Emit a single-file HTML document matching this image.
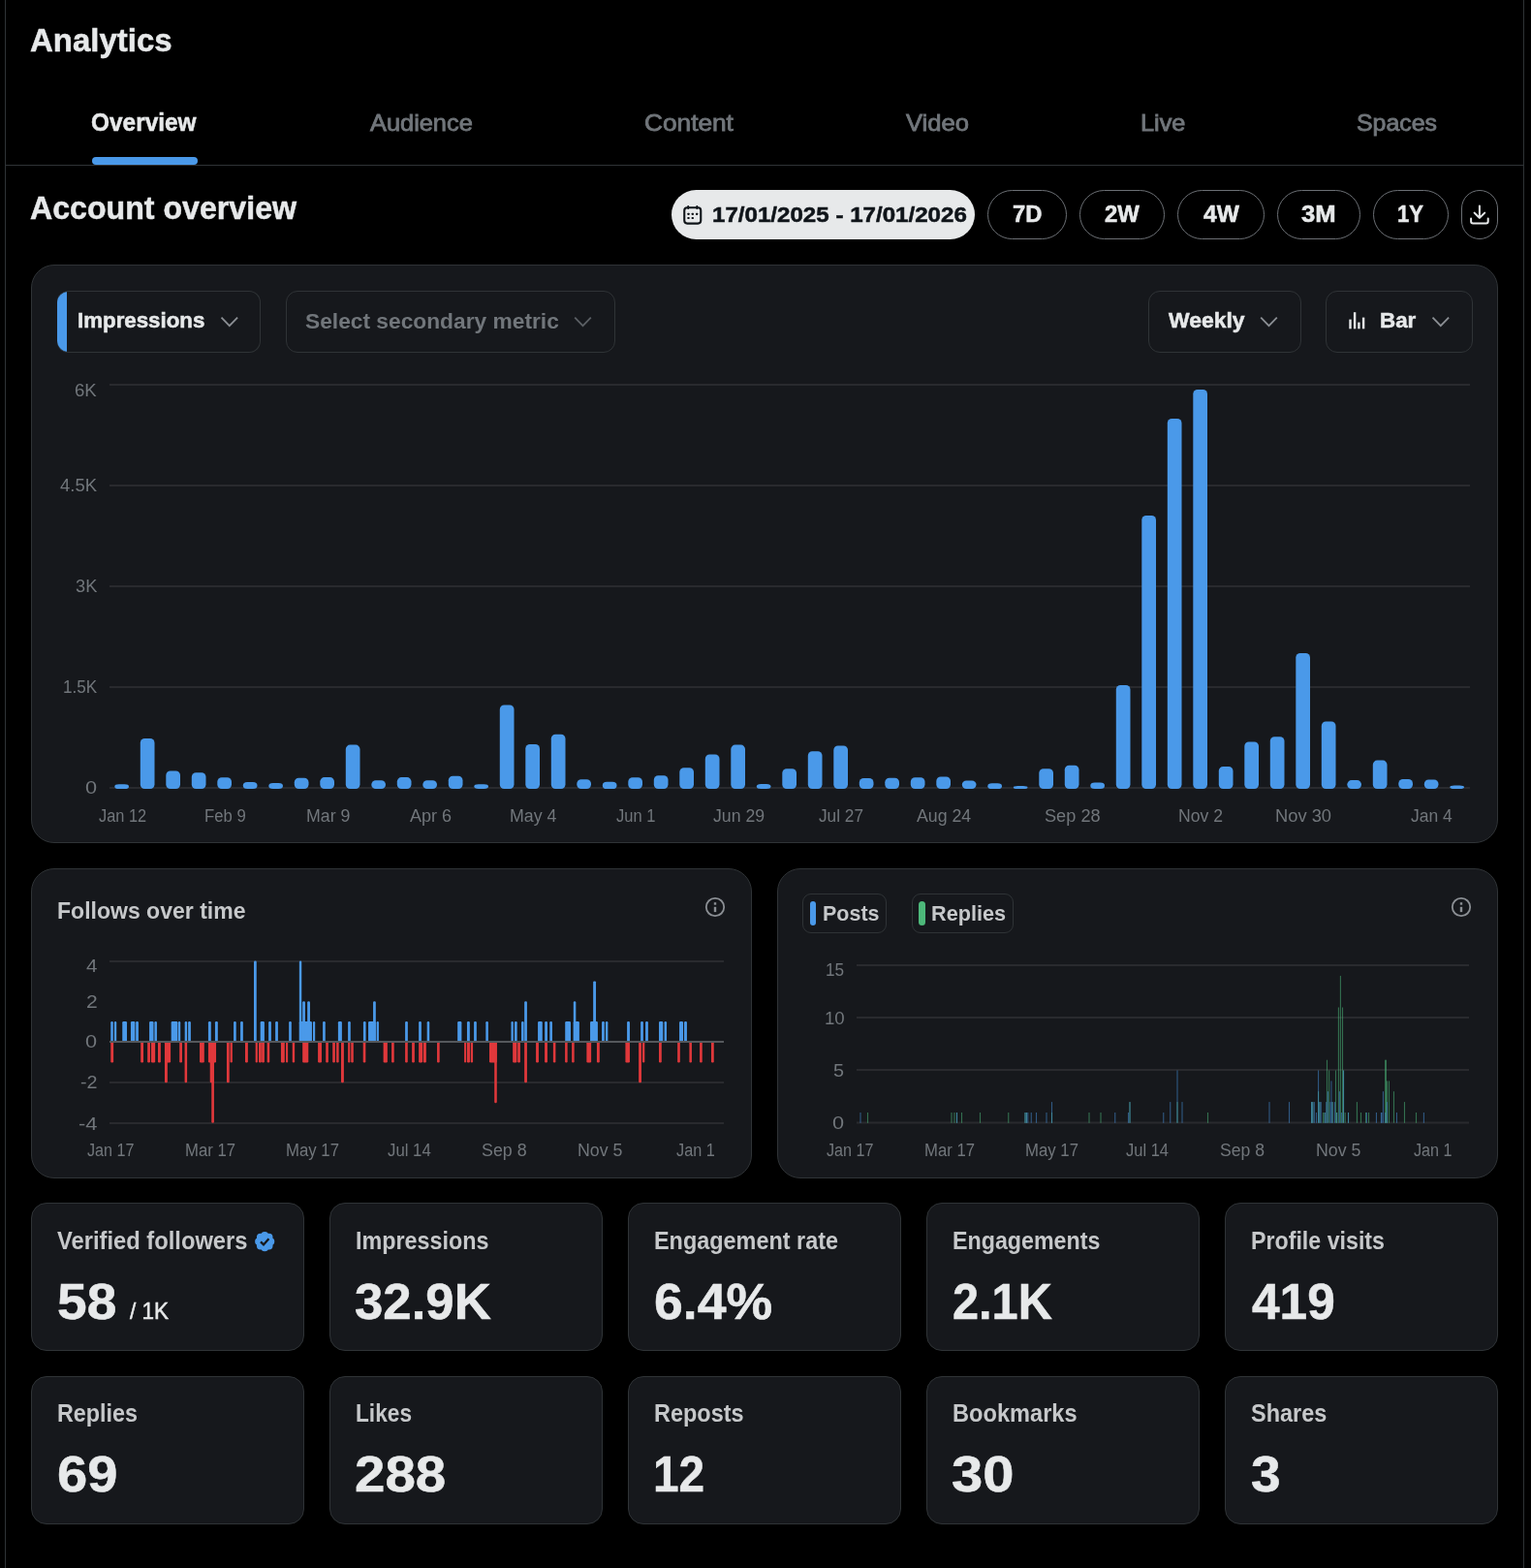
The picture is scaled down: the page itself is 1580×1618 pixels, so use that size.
<!DOCTYPE html>
<html lang="en"><head><meta charset="utf-8"><title>Analytics</title>
<style>
html,body{margin:0;padding:0;background:#000;}
body{width:1580px;height:1618px;position:relative;overflow:hidden;font-family:"Liberation Sans",Arial,Helvetica,sans-serif;color:#e7e9ea;}
.t{position:absolute;white-space:nowrap;margin:0;padding:0;}
svg{position:absolute;left:0;top:0;overflow:visible;}
#root{position:absolute;left:0;top:0;width:1580px;height:1618px;will-change:transform;}
</style></head><body><div id="root">
<div style="position:absolute;left:5px;top:0px;width:1px;height:1618px;box-sizing:border-box;background:#2f3336"></div>
<div style="position:absolute;left:1572px;top:0px;width:1px;height:1618px;box-sizing:border-box;background:#2f3336"></div>
<div style="position:absolute;left:6px;top:170px;width:1566px;height:1px;box-sizing:border-box;background:#2f3336"></div>
<div class="t" style="left:31.01px;top:23px;font-size:33px;line-height:37px;font-weight:700;color:#e7e9ea;transform:scaleX(0.9992);transform-origin:0 0;-webkit-text-stroke:0.5px currentColor;">Analytics</div>
<div class="t" style="left:94.40px;top:112px;font-size:25.6px;line-height:28px;font-weight:700;color:#e7e9ea;transform:scaleX(0.9536);transform-origin:0 0;-webkit-text-stroke:0.5px currentColor;">Overview</div>
<div style="position:absolute;left:95px;top:162px;width:109px;height:7.5px;box-sizing:border-box;background:#4a99e9;border-radius:4px"></div>
<div class="t" style="left:381.75px;top:114px;font-size:23.6px;line-height:26px;font-weight:400;color:#71767b;transform:scaleX(1.0750);transform-origin:0 0;-webkit-text-stroke:0.8px currentColor;">Audience</div>
<div class="t" style="left:665.09px;top:114px;font-size:23.6px;line-height:26px;font-weight:400;color:#71767b;transform:scaleX(1.1119);transform-origin:0 0;-webkit-text-stroke:0.8px currentColor;">Content</div>
<div class="t" style="left:935.30px;top:114px;font-size:23.6px;line-height:26px;font-weight:400;color:#71767b;transform:scaleX(1.0840);transform-origin:0 0;-webkit-text-stroke:0.8px currentColor;">Video</div>
<div class="t" style="left:1176.73px;top:114px;font-size:23.6px;line-height:26px;font-weight:400;color:#71767b;transform:scaleX(1.0714);transform-origin:0 0;-webkit-text-stroke:0.8px currentColor;">Live</div>
<div class="t" style="left:1399.98px;top:114px;font-size:23.6px;line-height:26px;font-weight:400;color:#71767b;transform:scaleX(1.0548);transform-origin:0 0;-webkit-text-stroke:0.8px currentColor;">Spaces</div>
<div class="t" style="left:30.93px;top:196px;font-size:33.1px;line-height:37px;font-weight:700;color:#e7e9ea;transform:scaleX(0.9714);transform-origin:0 0;-webkit-text-stroke:0.5px currentColor;">Account overview</div>
<div style="position:absolute;left:693px;top:196px;width:313px;height:51px;box-sizing:border-box;background:#e7e9ea;border-radius:26px"></div>
<div class="t" style="left:735.40px;top:209px;font-size:22.3px;line-height:25px;font-weight:700;color:#0f1419;transform:scaleX(1.0816);transform-origin:0 0;-webkit-text-stroke:0.5px currentColor;">17/01/2025 - 17/01/2026</div>
<div style="position:absolute;left:1019px;top:196px;width:82px;height:51px;box-sizing:border-box;border:1px solid #6b6f74;border-radius:26px"></div>
<div class="t" style="left:1044.60px;top:208px;font-size:23.1px;line-height:26px;font-weight:700;color:#e7e9ea;transform:scaleX(1.0286);transform-origin:0 0;-webkit-text-stroke:0.5px currentColor;">7D</div>
<div style="position:absolute;left:1114px;top:196px;width:88px;height:51px;box-sizing:border-box;border:1px solid #6b6f74;border-radius:26px"></div>
<div class="t" style="left:1139.69px;top:208px;font-size:23.1px;line-height:26px;font-weight:700;color:#e7e9ea;transform:scaleX(1.0344);transform-origin:0 0;-webkit-text-stroke:0.5px currentColor;">2W</div>
<div style="position:absolute;left:1215px;top:196px;width:90px;height:51px;box-sizing:border-box;border:1px solid #6b6f74;border-radius:26px"></div>
<div class="t" style="left:1241.53px;top:208px;font-size:23.1px;line-height:26px;font-weight:700;color:#e7e9ea;transform:scaleX(1.0620);transform-origin:0 0;-webkit-text-stroke:0.5px currentColor;">4W</div>
<div style="position:absolute;left:1318px;top:196px;width:86px;height:51px;box-sizing:border-box;border:1px solid #6b6f74;border-radius:26px"></div>
<div class="t" style="left:1343.34px;top:208px;font-size:23.1px;line-height:26px;font-weight:700;color:#e7e9ea;transform:scaleX(1.1111);transform-origin:0 0;-webkit-text-stroke:0.5px currentColor;">3M</div>
<div style="position:absolute;left:1417px;top:196px;width:78px;height:51px;box-sizing:border-box;border:1px solid #6b6f74;border-radius:26px"></div>
<div class="t" style="left:1441.94px;top:208px;font-size:23.1px;line-height:26px;font-weight:700;color:#e7e9ea;transform:scaleX(0.9528);transform-origin:0 0;-webkit-text-stroke:0.5px currentColor;">1Y</div>
<div style="position:absolute;left:1508px;top:196px;width:38px;height:51px;box-sizing:border-box;border:1px solid #6b6f74;border-radius:19px"></div>
<div style="position:absolute;left:32px;top:273px;width:1514px;height:597px;box-sizing:border-box;background:#16181c;border:1px solid #2f3336;border-radius:24px"></div>
<div style="position:absolute;left:59px;top:300px;width:210px;height:64px;box-sizing:border-box;border:1px solid #2f3336;border-radius:12px;background:linear-gradient(90deg,#4a99e9 0,#4a99e9 10px,transparent 10px);border-left:0"></div>
<div class="t" style="left:79.53px;top:317px;font-size:22.8px;line-height:26px;font-weight:700;color:#e7e9ea;transform:scaleX(0.9781);transform-origin:0 0;-webkit-text-stroke:0.5px currentColor;">Impressions</div>
<div style="position:absolute;left:295px;top:300px;width:340px;height:64px;box-sizing:border-box;border:1px solid #2f3336;border-radius:12px"></div>
<div class="t" style="left:315.16px;top:319px;font-size:22px;line-height:25px;font-weight:700;color:#71767b;transform:scaleX(1.0342);transform-origin:0 0;">Select secondary metric</div>
<div style="position:absolute;left:1185px;top:300px;width:158px;height:64px;box-sizing:border-box;border:1px solid #2f3336;border-radius:12px"></div>
<div class="t" style="left:1205.68px;top:317px;font-size:22.8px;line-height:26px;font-weight:700;color:#e7e9ea;transform:scaleX(1.0049);transform-origin:0 0;-webkit-text-stroke:0.5px currentColor;">Weekly</div>
<div style="position:absolute;left:1368px;top:300px;width:152px;height:64px;box-sizing:border-box;border:1px solid #2f3336;border-radius:12px"></div>
<div class="t" style="left:1424.12px;top:317px;font-size:22.8px;line-height:26px;font-weight:700;color:#e7e9ea;transform:scaleX(0.9810);transform-origin:0 0;-webkit-text-stroke:0.5px currentColor;">Bar</div>
<div class="t" style="left:77.47px;top:392px;font-size:19.2px;line-height:21px;font-weight:400;color:#71767b;transform:scaleX(0.9680);transform-origin:0 0;">6K</div>
<div class="t" style="left:62.19px;top:490px;font-size:19.2px;line-height:21px;font-weight:400;color:#71767b;transform:scaleX(0.9627);transform-origin:0 0;">4.5K</div>
<div class="t" style="left:77.91px;top:594px;font-size:19.2px;line-height:21px;font-weight:400;color:#71767b;transform:scaleX(0.9493);transform-origin:0 0;">3K</div>
<div class="t" style="left:65.00px;top:698px;font-size:19.2px;line-height:21px;font-weight:400;color:#71767b;transform:scaleX(0.8912);transform-origin:0 0;">1.5K</div>
<div class="t" style="left:88.35px;top:802px;font-size:19.2px;line-height:21px;font-weight:400;color:#71767b;transform:scaleX(1.1316);transform-origin:0 0;">0</div>
<div class="t" style="left:101.95px;top:831px;font-size:19.2px;line-height:21px;font-weight:400;color:#71767b;transform:scaleX(0.8517);transform-origin:0 0;">Jan 12</div>
<div class="t" style="left:211.03px;top:831px;font-size:19.2px;line-height:21px;font-weight:400;color:#71767b;transform:scaleX(0.8713);transform-origin:0 0;">Feb 9</div>
<div class="t" style="left:315.84px;top:831px;font-size:19.2px;line-height:21px;font-weight:400;color:#71767b;transform:scaleX(0.9255);transform-origin:0 0;">Mar 9</div>
<div class="t" style="left:422.86px;top:831px;font-size:19.2px;line-height:21px;font-weight:400;color:#71767b;transform:scaleX(0.9398);transform-origin:0 0;">Apr 6</div>
<div class="t" style="left:526.24px;top:831px;font-size:19.2px;line-height:21px;font-weight:400;color:#71767b;transform:scaleX(0.9276);transform-origin:0 0;">May 4</div>
<div class="t" style="left:635.75px;top:831px;font-size:19.2px;line-height:21px;font-weight:400;color:#71767b;transform:scaleX(0.8614);transform-origin:0 0;">Jun 1</div>
<div class="t" style="left:735.53px;top:831px;font-size:19.2px;line-height:21px;font-weight:400;color:#71767b;transform:scaleX(0.9217);transform-origin:0 0;">Jun 29</div>
<div class="t" style="left:845.34px;top:831px;font-size:19.2px;line-height:21px;font-weight:400;color:#71767b;transform:scaleX(0.8989);transform-origin:0 0;">Jul 27</div>
<div class="t" style="left:945.76px;top:831px;font-size:19.2px;line-height:21px;font-weight:400;color:#71767b;transform:scaleX(0.9248);transform-origin:0 0;">Aug 24</div>
<div class="t" style="left:1077.78px;top:831px;font-size:19.2px;line-height:21px;font-weight:400;color:#71767b;transform:scaleX(0.9470);transform-origin:0 0;">Sep 28</div>
<div class="t" style="left:1216.25px;top:831px;font-size:19.2px;line-height:21px;font-weight:400;color:#71767b;transform:scaleX(0.9183);transform-origin:0 0;">Nov 2</div>
<div class="t" style="left:1316.00px;top:831px;font-size:19.2px;line-height:21px;font-weight:400;color:#71767b;transform:scaleX(0.9540);transform-origin:0 0;">Nov 30</div>
<div class="t" style="left:1455.84px;top:831px;font-size:19.2px;line-height:21px;font-weight:400;color:#71767b;transform:scaleX(0.9131);transform-origin:0 0;">Jan 4</div>
<div style="position:absolute;left:32px;top:896px;width:744px;height:320px;box-sizing:border-box;background:#16181c;border:1px solid #2f3336;border-radius:24px"></div>
<div style="position:absolute;left:802px;top:896px;width:744px;height:320px;box-sizing:border-box;background:#16181c;border:1px solid #2f3336;border-radius:24px"></div>
<div class="t" style="left:59.38px;top:927px;font-size:23.2px;line-height:26px;font-weight:700;color:#c6c8ca;transform:scaleX(0.9931);transform-origin:0 0;">Follows over time</div>
<div class="t" style="left:88.95px;top:986px;font-size:19.2px;line-height:21px;font-weight:400;color:#71767b;transform:scaleX(1.0733);transform-origin:0 0;">4</div>
<div class="t" style="left:88.95px;top:1023px;font-size:19.2px;line-height:21px;font-weight:400;color:#71767b;transform:scaleX(1.0973);transform-origin:0 0;">2</div>
<div class="t" style="left:88.35px;top:1064px;font-size:19.2px;line-height:21px;font-weight:400;color:#71767b;transform:scaleX(1.1316);transform-origin:0 0;">0</div>
<div class="t" style="left:83.03px;top:1106px;font-size:19.2px;line-height:21px;font-weight:400;color:#71767b;transform:scaleX(1.0292);transform-origin:0 0;">-2</div>
<div class="t" style="left:80.93px;top:1149px;font-size:19.2px;line-height:21px;font-weight:400;color:#71767b;transform:scaleX(1.1432);transform-origin:0 0;">-4</div>
<div class="t" style="left:89.76px;top:1176px;font-size:19.2px;line-height:21px;font-weight:400;color:#71767b;transform:scaleX(0.8428);transform-origin:0 0;">Jan 17</div>
<div class="t" style="left:190.88px;top:1176px;font-size:19.2px;line-height:21px;font-weight:400;color:#71767b;transform:scaleX(0.8700);transform-origin:0 0;">Mar 17</div>
<div class="t" style="left:295.12px;top:1176px;font-size:19.2px;line-height:21px;font-weight:400;color:#71767b;transform:scaleX(0.8736);transform-origin:0 0;">May 17</div>
<div class="t" style="left:400.25px;top:1176px;font-size:19.2px;line-height:21px;font-weight:400;color:#71767b;transform:scaleX(0.8738);transform-origin:0 0;">Jul 14</div>
<div class="t" style="left:497.20px;top:1176px;font-size:19.2px;line-height:21px;font-weight:400;color:#71767b;transform:scaleX(0.9285);transform-origin:0 0;">Sep 8</div>
<div class="t" style="left:596.29px;top:1176px;font-size:19.2px;line-height:21px;font-weight:400;color:#71767b;transform:scaleX(0.9265);transform-origin:0 0;">Nov 5</div>
<div class="t" style="left:698.01px;top:1176px;font-size:19.2px;line-height:21px;font-weight:400;color:#71767b;transform:scaleX(0.8472);transform-origin:0 0;">Jan 1</div>
<div style="position:absolute;left:828px;top:922px;width:87px;height:41px;box-sizing:border-box;border:1px solid #2f3336;border-radius:9px"></div>
<div style="position:absolute;left:836px;top:930px;width:6.4px;height:25px;box-sizing:border-box;background:#4a99e9;border-radius:3.2px"></div>
<div class="t" style="left:848.78px;top:930px;font-size:22.5px;line-height:25px;font-weight:700;color:#c6c8ca;transform:scaleX(0.9543);transform-origin:0 0;">Posts</div>
<div style="position:absolute;left:941px;top:922px;width:105px;height:41px;box-sizing:border-box;border:1px solid #2f3336;border-radius:9px"></div>
<div style="position:absolute;left:948px;top:930px;width:7px;height:25px;box-sizing:border-box;background:#4db87a;border-radius:3.5px"></div>
<div class="t" style="left:961.37px;top:930px;font-size:22.5px;line-height:25px;font-weight:700;color:#c6c8ca;transform:scaleX(0.9632);transform-origin:0 0;">Replies</div>
<div class="t" style="left:852.39px;top:990px;font-size:19.2px;line-height:21px;font-weight:400;color:#71767b;transform:scaleX(0.8956);transform-origin:0 0;">15</div>
<div class="t" style="left:850.78px;top:1040px;font-size:19.2px;line-height:21px;font-weight:400;color:#71767b;transform:scaleX(0.9712);transform-origin:0 0;">10</div>
<div class="t" style="left:860.41px;top:1094px;font-size:19.2px;line-height:21px;font-weight:400;color:#71767b;transform:scaleX(1.0314);transform-origin:0 0;">5</div>
<div class="t" style="left:859.35px;top:1148px;font-size:19.2px;line-height:21px;font-weight:400;color:#71767b;transform:scaleX(1.1316);transform-origin:0 0;">0</div>
<div class="t" style="left:852.76px;top:1176px;font-size:19.2px;line-height:21px;font-weight:400;color:#71767b;transform:scaleX(0.8428);transform-origin:0 0;">Jan 17</div>
<div class="t" style="left:953.88px;top:1176px;font-size:19.2px;line-height:21px;font-weight:400;color:#71767b;transform:scaleX(0.8700);transform-origin:0 0;">Mar 17</div>
<div class="t" style="left:1057.62px;top:1176px;font-size:19.2px;line-height:21px;font-weight:400;color:#71767b;transform:scaleX(0.8736);transform-origin:0 0;">May 17</div>
<div class="t" style="left:1162.25px;top:1176px;font-size:19.2px;line-height:21px;font-weight:400;color:#71767b;transform:scaleX(0.8589);transform-origin:0 0;">Jul 14</div>
<div class="t" style="left:1258.96px;top:1176px;font-size:19.2px;line-height:21px;font-weight:400;color:#71767b;transform:scaleX(0.9182);transform-origin:0 0;">Sep 8</div>
<div class="t" style="left:1357.54px;top:1176px;font-size:19.2px;line-height:21px;font-weight:400;color:#71767b;transform:scaleX(0.9265);transform-origin:0 0;">Nov 5</div>
<div class="t" style="left:1459.26px;top:1176px;font-size:19.2px;line-height:21px;font-weight:400;color:#71767b;transform:scaleX(0.8417);transform-origin:0 0;">Jan 1</div>
<div style="position:absolute;left:32px;top:1241px;width:282px;height:153px;box-sizing:border-box;background:#16181c;border:1px solid #2f3336;border-radius:16px"></div>
<div class="t" style="left:58.66px;top:1266px;font-size:25px;line-height:28px;font-weight:700;color:#c6c8ca;transform:scaleX(0.9492);transform-origin:0 0;">Verified followers</div>
<div class="t" style="left:58.95px;top:1315px;font-size:51px;line-height:57px;font-weight:700;color:#e7e9ea;transform:scaleX(1.0808);transform-origin:0 0;-webkit-text-stroke:0.5px currentColor;">58</div>
<div style="position:absolute;left:340px;top:1241px;width:282px;height:153px;box-sizing:border-box;background:#16181c;border:1px solid #2f3336;border-radius:16px"></div>
<div class="t" style="left:367.06px;top:1266px;font-size:25px;line-height:28px;font-weight:700;color:#c6c8ca;transform:scaleX(0.9334);transform-origin:0 0;">Impressions</div>
<div class="t" style="left:366.34px;top:1315px;font-size:51px;line-height:57px;font-weight:700;color:#e7e9ea;transform:scaleX(1.0342);transform-origin:0 0;-webkit-text-stroke:0.5px currentColor;">32.9K</div>
<div style="position:absolute;left:648px;top:1241px;width:282px;height:153px;box-sizing:border-box;background:#16181c;border:1px solid #2f3336;border-radius:16px"></div>
<div class="t" style="left:674.85px;top:1266px;font-size:25px;line-height:28px;font-weight:700;color:#c6c8ca;transform:scaleX(0.9369);transform-origin:0 0;">Engagement rate</div>
<div class="t" style="left:674.97px;top:1315px;font-size:51px;line-height:57px;font-weight:700;color:#e7e9ea;transform:scaleX(1.0497);transform-origin:0 0;-webkit-text-stroke:0.5px currentColor;">6.4%</div>
<div style="position:absolute;left:956px;top:1241px;width:282px;height:153px;box-sizing:border-box;background:#16181c;border:1px solid #2f3336;border-radius:16px"></div>
<div class="t" style="left:983.17px;top:1266px;font-size:25px;line-height:28px;font-weight:700;color:#c6c8ca;transform:scaleX(0.9294);transform-origin:0 0;">Engagements</div>
<div class="t" style="left:983.25px;top:1315px;font-size:51px;line-height:57px;font-weight:700;color:#e7e9ea;transform:scaleX(0.9542);transform-origin:0 0;-webkit-text-stroke:0.5px currentColor;">2.1K</div>
<div style="position:absolute;left:1264px;top:1241px;width:282px;height:153px;box-sizing:border-box;background:#16181c;border:1px solid #2f3336;border-radius:16px"></div>
<div class="t" style="left:1291.17px;top:1266px;font-size:25px;line-height:28px;font-weight:700;color:#c6c8ca;transform:scaleX(0.9280);transform-origin:0 0;">Profile visits</div>
<div class="t" style="left:1291.53px;top:1315px;font-size:51px;line-height:57px;font-weight:700;color:#e7e9ea;transform:scaleX(1.0075);transform-origin:0 0;-webkit-text-stroke:0.5px currentColor;">419</div>
<div style="position:absolute;left:32px;top:1420px;width:282px;height:153px;box-sizing:border-box;background:#16181c;border:1px solid #2f3336;border-radius:16px"></div>
<div class="t" style="left:58.86px;top:1444px;font-size:25px;line-height:28px;font-weight:700;color:#c6c8ca;transform:scaleX(0.9341);transform-origin:0 0;">Replies</div>
<div class="t" style="left:58.58px;top:1493px;font-size:51px;line-height:57px;font-weight:700;color:#e7e9ea;transform:scaleX(1.1008);transform-origin:0 0;-webkit-text-stroke:0.5px currentColor;">69</div>
<div style="position:absolute;left:340px;top:1420px;width:282px;height:153px;box-sizing:border-box;background:#16181c;border:1px solid #2f3336;border-radius:16px"></div>
<div class="t" style="left:366.90px;top:1444px;font-size:25px;line-height:28px;font-weight:700;color:#c6c8ca;transform:scaleX(0.9073);transform-origin:0 0;">Likes</div>
<div class="t" style="left:366.48px;top:1493px;font-size:51px;line-height:57px;font-weight:700;color:#e7e9ea;transform:scaleX(1.1073);transform-origin:0 0;-webkit-text-stroke:0.5px currentColor;">288</div>
<div style="position:absolute;left:648px;top:1420px;width:282px;height:153px;box-sizing:border-box;background:#16181c;border:1px solid #2f3336;border-radius:16px"></div>
<div class="t" style="left:674.85px;top:1444px;font-size:25px;line-height:28px;font-weight:700;color:#c6c8ca;transform:scaleX(0.9387);transform-origin:0 0;">Reposts</div>
<div class="t" style="left:674.04px;top:1493px;font-size:51px;line-height:57px;font-weight:700;color:#e7e9ea;transform:scaleX(0.9365);transform-origin:0 0;-webkit-text-stroke:0.5px currentColor;">12</div>
<div style="position:absolute;left:956px;top:1420px;width:282px;height:153px;box-sizing:border-box;background:#16181c;border:1px solid #2f3336;border-radius:16px"></div>
<div class="t" style="left:982.84px;top:1444px;font-size:25px;line-height:28px;font-weight:700;color:#c6c8ca;transform:scaleX(0.9444);transform-origin:0 0;">Bookmarks</div>
<div class="t" style="left:981.92px;top:1493px;font-size:51px;line-height:57px;font-weight:700;color:#e7e9ea;transform:scaleX(1.1369);transform-origin:0 0;-webkit-text-stroke:0.5px currentColor;">30</div>
<div style="position:absolute;left:1264px;top:1420px;width:282px;height:153px;box-sizing:border-box;background:#16181c;border:1px solid #2f3336;border-radius:16px"></div>
<div class="t" style="left:1291.14px;top:1444px;font-size:25px;line-height:28px;font-weight:700;color:#c6c8ca;transform:scaleX(0.9390);transform-origin:0 0;">Shares</div>
<div class="t" style="left:1290.79px;top:1493px;font-size:51px;line-height:57px;font-weight:700;color:#e7e9ea;transform:scaleX(1.0801);transform-origin:0 0;-webkit-text-stroke:0.5px currentColor;">3</div>
<div class="t" style="left:134.00px;top:1340px;font-size:23.2px;line-height:26px;font-weight:400;color:#e7e9ea;transform:scaleX(0.9709);transform-origin:0 0;-webkit-text-stroke:0.5px currentColor;">/ 1K</div>
<svg width="1580" height="1618" viewBox="0 0 1580 1618">
<g fill="none" stroke="#0f1419" stroke-width="2"><rect x="706.25" y="214.3" width="17" height="16.3" rx="3" stroke-width="2.1"/><path d="M710.2 212.9v2.2M719.3 212.9v2.2" stroke-linecap="round"/></g>
<rect x="709.4" y="219.70000000000002" width="2.2" height="2.2" rx="0.6" fill="#0f1419"/>
<rect x="713.6999999999999" y="219.70000000000002" width="2.2" height="2.2" rx="0.6" fill="#0f1419"/>
<rect x="718.0" y="219.70000000000002" width="2.2" height="2.2" rx="0.6" fill="#0f1419"/>
<rect x="709.4" y="223.9" width="2.2" height="2.2" rx="0.6" fill="#0f1419"/>
<rect x="713.6999999999999" y="223.9" width="2.2" height="2.2" rx="0.6" fill="#0f1419"/>
<g fill="none" stroke="#e7e9ea" stroke-width="2" stroke-linecap="round" stroke-linejoin="round"><path d="M1526.9 212.6V224.6M1521.6 219.6l5.3 5.3 5.3-5.3"/><path d="M1518.1 225.6v3a2 2 0 0 0 2 2h13.6a2 2 0 0 0 2-2v-3"/></g>
<path d="M228.5 327.7L236.8 336.1L245.10000000000002 327.7" fill="none" stroke="#8b8f94" stroke-width="1.8"/>
<path d="M593.2 327.7L601.5 336.1L609.8 327.7" fill="none" stroke="#5b5f64" stroke-width="1.8"/>
<path d="M1301.2 327.7L1309.5 336.1L1317.8 327.7" fill="none" stroke="#8b8f94" stroke-width="1.8"/>
<path d="M1478.5 327.7L1486.8 336.1L1495.1 327.7" fill="none" stroke="#8b8f94" stroke-width="1.8"/>
<rect x="1392.3" y="329.6" width="2.4" height="9.7" fill="#e7e9ea"/>
<rect x="1396.9" y="322.2" width="2.4" height="17.1" fill="#e7e9ea"/>
<rect x="1401.2" y="332.6" width="2.4" height="6.7" fill="#e7e9ea"/>
<rect x="1405.9" y="327.6" width="2.4" height="11.7" fill="#e7e9ea"/>
<circle cx="738" cy="936" r="9.2" fill="none" stroke="#8b8f94" stroke-width="1.8"/><rect x="736.8" y="931.2" width="2.4" height="2.5" fill="#8b8f94"/><rect x="736.8" y="935.8" width="2.4" height="5.3" fill="#8b8f94"/>
<circle cx="1508" cy="936" r="9.2" fill="none" stroke="#8b8f94" stroke-width="1.8"/><rect x="1506.8" y="931.2" width="2.4" height="2.5" fill="#8b8f94"/><rect x="1506.8" y="935.8" width="2.4" height="5.3" fill="#8b8f94"/>
<circle cx="273.20" cy="1274.96" r="3.96" fill="#4a99e9"/><circle cx="277.54" cy="1276.76" r="3.96" fill="#4a99e9"/><circle cx="279.34" cy="1281.10" r="3.96" fill="#4a99e9"/><circle cx="277.54" cy="1285.44" r="3.96" fill="#4a99e9"/><circle cx="273.20" cy="1287.24" r="3.96" fill="#4a99e9"/><circle cx="268.86" cy="1285.44" r="3.96" fill="#4a99e9"/><circle cx="267.06" cy="1281.10" r="3.96" fill="#4a99e9"/><circle cx="268.86" cy="1276.76" r="3.96" fill="#4a99e9"/><circle cx="273.2" cy="1281.1" r="6.93" fill="#4a99e9"/><path d="M269.0 1281.3999999999999l3 3 5.4-6.2" fill="none" stroke="#16181c" stroke-width="2.3"/>
<rect x="113" y="396" width="1404" height="2" fill="#292a2e"/>
<rect x="113" y="500" width="1404" height="2" fill="#292a2e"/>
<rect x="113" y="604" width="1404" height="2" fill="#292a2e"/>
<rect x="113" y="708" width="1404" height="2" fill="#292a2e"/>
<rect x="113" y="812" width="1404" height="2" fill="#292a2e"/>
<rect x="118.3" y="809.3" width="14.7" height="4.7" rx="4.5" ry="2.4" fill="#4a99e9"/>
<rect x="144.8" y="761.9" width="14.7" height="52.1" rx="4.5" ry="4.5" fill="#4a99e9"/>
<rect x="171.3" y="795.5" width="14.7" height="18.5" rx="4.5" ry="4.5" fill="#4a99e9"/>
<rect x="197.8" y="797.3" width="14.7" height="16.7" rx="4.5" ry="4.5" fill="#4a99e9"/>
<rect x="224.3" y="802.3" width="14.7" height="11.7" rx="4.5" ry="4.5" fill="#4a99e9"/>
<rect x="250.8" y="806.9" width="14.7" height="7.1" rx="4.5" ry="3.6" fill="#4a99e9"/>
<rect x="277.3" y="808.0" width="14.7" height="6.0" rx="4.5" ry="3.0" fill="#4a99e9"/>
<rect x="303.8" y="802.8" width="14.7" height="11.2" rx="4.5" ry="4.5" fill="#4a99e9"/>
<rect x="330.3" y="802.1" width="14.7" height="11.9" rx="4.5" ry="4.5" fill="#4a99e9"/>
<rect x="356.8" y="768.6" width="14.7" height="45.4" rx="4.5" ry="4.5" fill="#4a99e9"/>
<rect x="383.3" y="805.3" width="14.7" height="8.7" rx="4.5" ry="4.4" fill="#4a99e9"/>
<rect x="409.8" y="802.1" width="14.7" height="11.9" rx="4.5" ry="4.5" fill="#4a99e9"/>
<rect x="436.3" y="805.3" width="14.7" height="8.7" rx="4.5" ry="4.4" fill="#4a99e9"/>
<rect x="462.8" y="800.8" width="14.7" height="13.2" rx="4.5" ry="4.5" fill="#4a99e9"/>
<rect x="489.3" y="809.2" width="14.7" height="4.8" rx="4.5" ry="2.4" fill="#4a99e9"/>
<rect x="515.8" y="727.4" width="14.7" height="86.6" rx="4.5" ry="4.5" fill="#4a99e9"/>
<rect x="542.3" y="767.9" width="14.7" height="46.1" rx="4.5" ry="4.5" fill="#4a99e9"/>
<rect x="568.8" y="757.7" width="14.7" height="56.3" rx="4.5" ry="4.5" fill="#4a99e9"/>
<rect x="595.3" y="804.2" width="14.7" height="9.8" rx="4.5" ry="4.5" fill="#4a99e9"/>
<rect x="621.8" y="806.7" width="14.7" height="7.3" rx="4.5" ry="3.6" fill="#4a99e9"/>
<rect x="648.3" y="802.3" width="14.7" height="11.7" rx="4.5" ry="4.5" fill="#4a99e9"/>
<rect x="674.8" y="800.3" width="14.7" height="13.7" rx="4.5" ry="4.5" fill="#4a99e9"/>
<rect x="701.3" y="792.3" width="14.7" height="21.7" rx="4.5" ry="4.5" fill="#4a99e9"/>
<rect x="727.8" y="778.4" width="14.7" height="35.6" rx="4.5" ry="4.5" fill="#4a99e9"/>
<rect x="754.3" y="768.6" width="14.7" height="45.4" rx="4.5" ry="4.5" fill="#4a99e9"/>
<rect x="780.8" y="809.0" width="14.7" height="5.0" rx="4.5" ry="2.5" fill="#4a99e9"/>
<rect x="807.3" y="793.2" width="14.7" height="20.8" rx="4.5" ry="4.5" fill="#4a99e9"/>
<rect x="833.8" y="775.2" width="14.7" height="38.8" rx="4.5" ry="4.5" fill="#4a99e9"/>
<rect x="860.3" y="769.5" width="14.7" height="44.5" rx="4.5" ry="4.5" fill="#4a99e9"/>
<rect x="886.8" y="803.0" width="14.7" height="11.0" rx="4.5" ry="4.5" fill="#4a99e9"/>
<rect x="913.3" y="802.8" width="14.7" height="11.2" rx="4.5" ry="4.5" fill="#4a99e9"/>
<rect x="939.8" y="802.3" width="14.7" height="11.7" rx="4.5" ry="4.5" fill="#4a99e9"/>
<rect x="966.3" y="801.4" width="14.7" height="12.6" rx="4.5" ry="4.5" fill="#4a99e9"/>
<rect x="992.8" y="805.5" width="14.7" height="8.5" rx="4.5" ry="4.2" fill="#4a99e9"/>
<rect x="1019.3" y="808.3" width="14.7" height="5.7" rx="4.5" ry="2.9" fill="#4a99e9"/>
<rect x="1045.8" y="811.0" width="14.7" height="3.0" rx="4.5" ry="1.5" fill="#4a99e9"/>
<rect x="1072.3" y="793.2" width="14.7" height="20.8" rx="4.5" ry="4.5" fill="#4a99e9"/>
<rect x="1098.8" y="789.8" width="14.7" height="24.2" rx="4.5" ry="4.5" fill="#4a99e9"/>
<rect x="1125.3" y="807.6" width="14.7" height="6.4" rx="4.5" ry="3.2" fill="#4a99e9"/>
<rect x="1151.8" y="707.0" width="14.7" height="107.0" rx="4.5" ry="4.5" fill="#4a99e9"/>
<rect x="1178.3" y="532.0" width="14.7" height="282.0" rx="4.5" ry="4.5" fill="#4a99e9"/>
<rect x="1204.8" y="432.0" width="14.7" height="382.0" rx="4.5" ry="4.5" fill="#4a99e9"/>
<rect x="1231.3" y="402.0" width="14.7" height="412.0" rx="4.5" ry="4.5" fill="#4a99e9"/>
<rect x="1257.8" y="791.0" width="14.7" height="23.0" rx="4.5" ry="4.5" fill="#4a99e9"/>
<rect x="1284.3" y="765.4" width="14.7" height="48.6" rx="4.5" ry="4.5" fill="#4a99e9"/>
<rect x="1310.8" y="760.2" width="14.7" height="53.8" rx="4.5" ry="4.5" fill="#4a99e9"/>
<rect x="1337.3" y="674.0" width="14.7" height="140.0" rx="4.5" ry="4.5" fill="#4a99e9"/>
<rect x="1363.8" y="744.5" width="14.7" height="69.5" rx="4.5" ry="4.5" fill="#4a99e9"/>
<rect x="1390.3" y="805.1" width="14.7" height="8.9" rx="4.5" ry="4.4" fill="#4a99e9"/>
<rect x="1416.8" y="784.6" width="14.7" height="29.4" rx="4.5" ry="4.5" fill="#4a99e9"/>
<rect x="1443.3" y="803.9" width="14.7" height="10.1" rx="4.5" ry="4.5" fill="#4a99e9"/>
<rect x="1469.8" y="804.4" width="14.7" height="9.6" rx="4.5" ry="4.5" fill="#4a99e9"/>
<rect x="1496.3" y="810.5" width="14.7" height="3.5" rx="4.5" ry="1.8" fill="#4a99e9"/>
<rect x="113" y="991" width="634" height="2" fill="#292a2e"/>
<rect x="113" y="1116" width="634" height="2" fill="#292a2e"/>
<rect x="113" y="1158" width="634" height="2" fill="#292a2e"/>
<rect x="114.24" y="1054.0" width="2.54" height="21.0" rx="1.2" fill="#4a99e9"/>
<rect x="117.91" y="1054.0" width="2.32" height="21.0" rx="1.2" fill="#4a99e9"/>
<rect x="126.25" y="1054.0" width="4.77" height="21.0" rx="1.2" fill="#4a99e9"/>
<rect x="134.93" y="1054.0" width="4.43" height="21.0" rx="1.2" fill="#4a99e9"/>
<rect x="140.16" y="1054.0" width="2.76" height="21.0" rx="1.2" fill="#4a99e9"/>
<rect x="154.07" y="1054.0" width="4.43" height="21.0" rx="1.2" fill="#4a99e9"/>
<rect x="159.41" y="1054.0" width="2.54" height="21.0" rx="1.2" fill="#4a99e9"/>
<rect x="176.66" y="1054.0" width="6.66" height="21.0" rx="1.2" fill="#4a99e9"/>
<rect x="183.89" y="1054.0" width="2.32" height="21.0" rx="1.2" fill="#4a99e9"/>
<rect x="190.68" y="1054.0" width="2.43" height="21.0" rx="1.2" fill="#4a99e9"/>
<rect x="194.13" y="1054.0" width="2.76" height="21.0" rx="1.2" fill="#4a99e9"/>
<rect x="214.93" y="1054.0" width="2.88" height="21.0" rx="1.2" fill="#4a99e9"/>
<rect x="221.94" y="1054.0" width="2.88" height="21.0" rx="1.2" fill="#4a99e9"/>
<rect x="241.08" y="1054.0" width="2.65" height="21.0" rx="1.2" fill="#4a99e9"/>
<rect x="248.09" y="1054.0" width="2.76" height="21.0" rx="1.2" fill="#4a99e9"/>
<rect x="262.00" y="991.6" width="2.76" height="83.4" rx="1.2" fill="#4a99e9"/>
<rect x="268.67" y="1054.0" width="4.21" height="21.0" rx="1.2" fill="#4a99e9"/>
<rect x="277.13" y="1054.0" width="2.76" height="21.0" rx="1.2" fill="#4a99e9"/>
<rect x="284.14" y="1054.0" width="2.76" height="21.0" rx="1.2" fill="#4a99e9"/>
<rect x="298.16" y="1054.0" width="2.65" height="21.0" rx="1.2" fill="#4a99e9"/>
<rect x="308.84" y="991.6" width="2.43" height="83.4" rx="1.2" fill="#4a99e9"/>
<rect x="308.84" y="1054.0" width="13.11" height="21.0" rx="1.2" fill="#4a99e9"/>
<rect x="312.18" y="1033.3" width="2.76" height="41.7" rx="1.2" fill="#4a99e9"/>
<rect x="317.19" y="1033.3" width="2.76" height="41.7" rx="1.2" fill="#4a99e9"/>
<rect x="322.97" y="1054.0" width="2.21" height="21.0" rx="1.2" fill="#4a99e9"/>
<rect x="333.10" y="1054.0" width="2.65" height="21.0" rx="1.2" fill="#4a99e9"/>
<rect x="348.90" y="1054.0" width="3.99" height="21.0" rx="1.2" fill="#4a99e9"/>
<rect x="359.13" y="1054.0" width="2.65" height="21.0" rx="1.2" fill="#4a99e9"/>
<rect x="374.93" y="1054.0" width="2.65" height="21.0" rx="1.2" fill="#4a99e9"/>
<rect x="380.05" y="1054.0" width="7.77" height="21.0" rx="1.2" fill="#4a99e9"/>
<rect x="385.06" y="1033.3" width="2.76" height="41.7" rx="1.2" fill="#4a99e9"/>
<rect x="388.62" y="1054.0" width="2.32" height="21.0" rx="1.2" fill="#4a99e9"/>
<rect x="418.10" y="1054.0" width="2.76" height="21.0" rx="1.2" fill="#4a99e9"/>
<rect x="432.12" y="1054.0" width="2.76" height="21.0" rx="1.2" fill="#4a99e9"/>
<rect x="440.69" y="1054.0" width="2.54" height="21.0" rx="1.2" fill="#4a99e9"/>
<rect x="472.18" y="1054.0" width="4.21" height="21.0" rx="1.2" fill="#4a99e9"/>
<rect x="481.97" y="1054.0" width="2.88" height="21.0" rx="1.2" fill="#4a99e9"/>
<rect x="489.09" y="1054.0" width="2.76" height="21.0" rx="1.2" fill="#4a99e9"/>
<rect x="501.33" y="1054.0" width="2.54" height="21.0" rx="1.2" fill="#4a99e9"/>
<rect x="527.48" y="1054.0" width="2.32" height="21.0" rx="1.2" fill="#4a99e9"/>
<rect x="531.04" y="1054.0" width="2.65" height="21.0" rx="1.2" fill="#4a99e9"/>
<rect x="538.05" y="1054.0" width="2.54" height="21.0" rx="1.2" fill="#4a99e9"/>
<rect x="541.16" y="1033.3" width="2.76" height="41.7" rx="1.2" fill="#4a99e9"/>
<rect x="555.07" y="1054.0" width="4.66" height="21.0" rx="1.2" fill="#4a99e9"/>
<rect x="562.19" y="1054.0" width="2.76" height="21.0" rx="1.2" fill="#4a99e9"/>
<rect x="567.31" y="1054.0" width="2.65" height="21.0" rx="1.2" fill="#4a99e9"/>
<rect x="583.22" y="1054.0" width="5.77" height="21.0" rx="1.2" fill="#4a99e9"/>
<rect x="591.79" y="1054.0" width="6.10" height="21.0" rx="1.2" fill="#4a99e9"/>
<rect x="591.79" y="1033.3" width="2.54" height="41.7" rx="1.2" fill="#4a99e9"/>
<rect x="609.04" y="1054.0" width="7.88" height="21.0" rx="1.2" fill="#4a99e9"/>
<rect x="612.15" y="1012.4" width="2.88" height="62.6" rx="1.2" fill="#4a99e9"/>
<rect x="621.05" y="1054.0" width="2.76" height="21.0" rx="1.2" fill="#4a99e9"/>
<rect x="624.95" y="1054.0" width="2.43" height="21.0" rx="1.2" fill="#4a99e9"/>
<rect x="647.09" y="1054.0" width="2.88" height="21.0" rx="1.2" fill="#4a99e9"/>
<rect x="661.11" y="1054.0" width="2.76" height="21.0" rx="1.2" fill="#4a99e9"/>
<rect x="666.11" y="1054.0" width="2.76" height="21.0" rx="1.2" fill="#4a99e9"/>
<rect x="680.02" y="1054.0" width="4.21" height="21.0" rx="1.2" fill="#4a99e9"/>
<rect x="685.59" y="1054.0" width="2.43" height="21.0" rx="1.2" fill="#4a99e9"/>
<rect x="701.05" y="1054.0" width="3.99" height="21.0" rx="1.2" fill="#4a99e9"/>
<rect x="706.06" y="1054.0" width="2.88" height="21.0" rx="1.2" fill="#4a99e9"/>
<rect x="114.24" y="1075" width="2.88" height="21.4" rx="1.2" fill="#e0383b"/>
<rect x="145.17" y="1075" width="2.88" height="21.4" rx="1.2" fill="#e0383b"/>
<rect x="152.18" y="1075" width="2.76" height="21.4" rx="1.2" fill="#e0383b"/>
<rect x="155.96" y="1075" width="4.21" height="21.4" rx="1.2" fill="#e0383b"/>
<rect x="162.97" y="1075" width="2.88" height="21.4" rx="1.2" fill="#e0383b"/>
<rect x="169.98" y="1075" width="6.10" height="21.4" rx="1.2" fill="#e0383b"/>
<rect x="169.98" y="1075" width="2.88" height="42.2" rx="1.2" fill="#e0383b"/>
<rect x="185.22" y="1075" width="2.76" height="21.4" rx="1.2" fill="#e0383b"/>
<rect x="190.57" y="1075" width="2.54" height="42.2" rx="1.2" fill="#e0383b"/>
<rect x="206.03" y="1075" width="4.77" height="21.4" rx="1.2" fill="#e0383b"/>
<rect x="214.93" y="1075" width="8.10" height="21.4" rx="1.2" fill="#e0383b"/>
<rect x="216.71" y="1075" width="4.21" height="42.2" rx="1.2" fill="#e0383b"/>
<rect x="218.27" y="1075" width="2.65" height="83.8" rx="1.2" fill="#e0383b"/>
<rect x="233.96" y="1075" width="2.76" height="42.2" rx="1.2" fill="#e0383b"/>
<rect x="237.52" y="1075" width="2.32" height="21.4" rx="1.2" fill="#e0383b"/>
<rect x="252.99" y="1075" width="2.88" height="21.4" rx="1.2" fill="#e0383b"/>
<rect x="263.67" y="1075" width="2.21" height="21.4" rx="1.2" fill="#e0383b"/>
<rect x="267.00" y="1075" width="2.88" height="21.4" rx="1.2" fill="#e0383b"/>
<rect x="270.12" y="1075" width="2.76" height="21.4" rx="1.2" fill="#e0383b"/>
<rect x="275.68" y="1075" width="2.54" height="21.4" rx="1.2" fill="#e0383b"/>
<rect x="289.93" y="1075" width="3.88" height="21.4" rx="1.2" fill="#e0383b"/>
<rect x="295.04" y="1075" width="2.10" height="21.4" rx="1.2" fill="#e0383b"/>
<rect x="301.72" y="1075" width="2.43" height="21.4" rx="1.2" fill="#e0383b"/>
<rect x="312.18" y="1075" width="6.10" height="21.4" rx="1.2" fill="#e0383b"/>
<rect x="328.09" y="1075" width="3.88" height="21.4" rx="1.2" fill="#e0383b"/>
<rect x="336.21" y="1075" width="2.65" height="21.4" rx="1.2" fill="#e0383b"/>
<rect x="343.22" y="1075" width="2.65" height="21.4" rx="1.2" fill="#e0383b"/>
<rect x="347.12" y="1075" width="2.54" height="21.4" rx="1.2" fill="#e0383b"/>
<rect x="352.01" y="1075" width="2.88" height="42.2" rx="1.2" fill="#e0383b"/>
<rect x="359.13" y="1075" width="2.21" height="21.4" rx="1.2" fill="#e0383b"/>
<rect x="362.25" y="1075" width="2.54" height="21.4" rx="1.2" fill="#e0383b"/>
<rect x="374.71" y="1075" width="2.65" height="21.4" rx="1.2" fill="#e0383b"/>
<rect x="395.63" y="1075" width="4.21" height="21.4" rx="1.2" fill="#e0383b"/>
<rect x="404.08" y="1075" width="2.65" height="21.4" rx="1.2" fill="#e0383b"/>
<rect x="418.10" y="1075" width="2.65" height="21.4" rx="1.2" fill="#e0383b"/>
<rect x="425.11" y="1075" width="2.76" height="21.4" rx="1.2" fill="#e0383b"/>
<rect x="432.12" y="1075" width="3.88" height="21.4" rx="1.2" fill="#e0383b"/>
<rect x="436.80" y="1075" width="3.10" height="21.4" rx="1.2" fill="#e0383b"/>
<rect x="451.04" y="1075" width="2.65" height="21.4" rx="1.2" fill="#e0383b"/>
<rect x="479.08" y="1075" width="1.99" height="21.4" rx="1.2" fill="#e0383b"/>
<rect x="481.86" y="1075" width="3.10" height="21.4" rx="1.2" fill="#e0383b"/>
<rect x="485.75" y="1075" width="2.32" height="21.4" rx="1.2" fill="#e0383b"/>
<rect x="505.00" y="1075" width="7.77" height="21.4" rx="1.2" fill="#e0383b"/>
<rect x="510.23" y="1075" width="2.54" height="63.2" rx="1.2" fill="#e0383b"/>
<rect x="529.15" y="1075" width="4.21" height="21.4" rx="1.2" fill="#e0383b"/>
<rect x="534.15" y="1075" width="2.76" height="21.4" rx="1.2" fill="#e0383b"/>
<rect x="541.16" y="1075" width="2.76" height="42.2" rx="1.2" fill="#e0383b"/>
<rect x="553.07" y="1075" width="2.88" height="21.4" rx="1.2" fill="#e0383b"/>
<rect x="562.08" y="1075" width="2.88" height="21.4" rx="1.2" fill="#e0383b"/>
<rect x="570.87" y="1075" width="2.54" height="21.4" rx="1.2" fill="#e0383b"/>
<rect x="583.11" y="1075" width="2.54" height="21.4" rx="1.2" fill="#e0383b"/>
<rect x="590.12" y="1075" width="2.54" height="21.4" rx="1.2" fill="#e0383b"/>
<rect x="605.36" y="1075" width="4.77" height="21.4" rx="1.2" fill="#e0383b"/>
<rect x="615.93" y="1075" width="2.88" height="21.4" rx="1.2" fill="#e0383b"/>
<rect x="645.42" y="1075" width="4.54" height="21.4" rx="1.2" fill="#e0383b"/>
<rect x="659.10" y="1075" width="2.88" height="42.2" rx="1.2" fill="#e0383b"/>
<rect x="663.00" y="1075" width="2.32" height="21.4" rx="1.2" fill="#e0383b"/>
<rect x="680.02" y="1075" width="2.76" height="21.4" rx="1.2" fill="#e0383b"/>
<rect x="699.16" y="1075" width="2.65" height="21.4" rx="1.2" fill="#e0383b"/>
<rect x="711.40" y="1075" width="2.54" height="21.4" rx="1.2" fill="#e0383b"/>
<rect x="722.08" y="1075" width="2.65" height="21.4" rx="1.2" fill="#e0383b"/>
<rect x="733.99" y="1075" width="2.76" height="21.4" rx="1.2" fill="#e0383b"/>
<rect x="113" y="1074" width="634" height="2" fill="#55585c"/>
<rect x="884" y="995" width="632" height="2" fill="#292a2e"/>
<rect x="884" y="1049" width="632" height="2" fill="#292a2e"/>
<rect x="884" y="1103" width="632" height="2" fill="#292a2e"/>
<rect x="884" y="1157.5" width="632" height="2" fill="#292a2e"/>
<rect x="894.95" y="1148.0" width="1.1" height="10.8" fill="rgba(77,184,122,0.55)"/>
<rect x="981.45" y="1148.0" width="1.1" height="10.8" fill="rgba(77,184,122,0.55)"/>
<rect x="984.45" y="1148.0" width="1.1" height="10.8" fill="rgba(77,184,122,0.55)"/>
<rect x="986.95" y="1148.0" width="1.1" height="10.8" fill="rgba(77,184,122,0.55)"/>
<rect x="991.95" y="1148.0" width="1.1" height="10.8" fill="rgba(77,184,122,0.55)"/>
<rect x="1010.95" y="1148.0" width="1.1" height="10.8" fill="rgba(77,184,122,0.55)"/>
<rect x="1040.20" y="1148.0" width="1.1" height="10.8" fill="rgba(77,184,122,0.55)"/>
<rect x="1057.45" y="1148.0" width="1.1" height="10.8" fill="rgba(77,184,122,0.55)"/>
<rect x="1058.85" y="1148.0" width="1.1" height="10.8" fill="rgba(77,184,122,0.55)"/>
<rect x="1084.95" y="1148.0" width="1.1" height="10.8" fill="rgba(77,184,122,0.55)"/>
<rect x="1123.45" y="1148.0" width="1.1" height="10.8" fill="rgba(77,184,122,0.55)"/>
<rect x="1135.45" y="1148.0" width="1.1" height="10.8" fill="rgba(77,184,122,0.55)"/>
<rect x="1165.45" y="1137.1" width="1.1" height="21.7" fill="rgba(77,184,122,0.55)"/>
<rect x="1214.45" y="1137.1" width="1.1" height="21.7" fill="rgba(77,184,122,0.55)"/>
<rect x="1245.95" y="1148.0" width="1.1" height="10.8" fill="rgba(77,184,122,0.55)"/>
<rect x="1353.02" y="1137.1" width="1.1" height="21.7" fill="rgba(77,184,122,0.55)"/>
<rect x="1354.25" y="1137.1" width="1.1" height="21.7" fill="rgba(77,184,122,0.55)"/>
<rect x="1360.03" y="1126.2" width="1.1" height="32.5" fill="rgba(77,184,122,0.55)"/>
<rect x="1361.37" y="1137.1" width="1.1" height="21.7" fill="rgba(77,184,122,0.55)"/>
<rect x="1365.04" y="1148.0" width="1.1" height="10.8" fill="rgba(77,184,122,0.55)"/>
<rect x="1366.71" y="1148.0" width="1.1" height="10.8" fill="rgba(77,184,122,0.55)"/>
<rect x="1368.94" y="1093.7" width="1.1" height="65.1" fill="rgba(77,184,122,0.55)"/>
<rect x="1371.05" y="1104.5" width="1.1" height="54.2" fill="rgba(77,184,122,0.55)"/>
<rect x="1374.50" y="1137.1" width="1.1" height="21.7" fill="rgba(77,184,122,0.55)"/>
<rect x="1377.95" y="1104.5" width="1.1" height="54.2" fill="rgba(77,184,122,0.55)"/>
<rect x="1379.06" y="1148.0" width="1.1" height="10.8" fill="rgba(77,184,122,0.55)"/>
<rect x="1380.84" y="1039.5" width="1.1" height="119.3" fill="rgba(77,184,122,0.55)"/>
<rect x="1382.84" y="1006.9" width="1.1" height="151.9" fill="rgba(77,184,122,0.55)"/>
<rect x="1384.96" y="1039.5" width="1.1" height="119.3" fill="rgba(77,184,122,0.55)"/>
<rect x="1385.96" y="1104.5" width="1.1" height="54.2" fill="rgba(77,184,122,0.55)"/>
<rect x="1387.63" y="1148.0" width="1.1" height="10.8" fill="rgba(77,184,122,0.55)"/>
<rect x="1390.97" y="1148.0" width="1.1" height="10.8" fill="rgba(77,184,122,0.55)"/>
<rect x="1399.87" y="1137.1" width="1.1" height="21.7" fill="rgba(77,184,122,0.55)"/>
<rect x="1403.98" y="1148.0" width="1.1" height="10.8" fill="rgba(77,184,122,0.55)"/>
<rect x="1408.99" y="1148.0" width="1.1" height="10.8" fill="rgba(77,184,122,0.55)"/>
<rect x="1412.00" y="1148.0" width="1.1" height="10.8" fill="rgba(77,184,122,0.55)"/>
<rect x="1429.02" y="1093.7" width="1.1" height="65.1" fill="rgba(77,184,122,0.55)"/>
<rect x="1429.91" y="1093.7" width="1.1" height="65.1" fill="rgba(77,184,122,0.55)"/>
<rect x="1430.91" y="1115.4" width="1.1" height="43.4" fill="rgba(77,184,122,0.55)"/>
<rect x="1432.91" y="1115.4" width="1.1" height="43.4" fill="rgba(77,184,122,0.55)"/>
<rect x="1437.92" y="1126.2" width="1.1" height="32.5" fill="rgba(77,184,122,0.55)"/>
<rect x="1448.94" y="1137.1" width="1.1" height="21.7" fill="rgba(77,184,122,0.55)"/>
<rect x="1460.95" y="1148.0" width="1.1" height="10.8" fill="rgba(77,184,122,0.55)"/>
<rect x="887.45" y="1148.0" width="1.1" height="10.8" fill="rgba(74,153,233,0.5)"/>
<rect x="986.95" y="1148.0" width="1.1" height="10.8" fill="rgba(74,153,233,0.5)"/>
<rect x="1057.45" y="1148.0" width="1.1" height="10.8" fill="rgba(74,153,233,0.5)"/>
<rect x="1058.85" y="1148.0" width="1.1" height="10.8" fill="rgba(74,153,233,0.5)"/>
<rect x="1060.25" y="1148.0" width="1.1" height="10.8" fill="rgba(74,153,233,0.5)"/>
<rect x="1063.70" y="1148.0" width="1.1" height="10.8" fill="rgba(74,153,233,0.5)"/>
<rect x="1068.95" y="1148.0" width="1.1" height="10.8" fill="rgba(74,153,233,0.5)"/>
<rect x="1079.45" y="1148.0" width="1.1" height="10.8" fill="rgba(74,153,233,0.5)"/>
<rect x="1084.95" y="1137.1" width="1.1" height="21.7" fill="rgba(74,153,233,0.5)"/>
<rect x="1150.20" y="1148.0" width="1.1" height="10.8" fill="rgba(74,153,233,0.5)"/>
<rect x="1163.95" y="1148.0" width="1.1" height="10.8" fill="rgba(74,153,233,0.5)"/>
<rect x="1165.45" y="1137.1" width="1.1" height="21.7" fill="rgba(74,153,233,0.5)"/>
<rect x="1200.20" y="1148.0" width="1.1" height="10.8" fill="rgba(74,153,233,0.5)"/>
<rect x="1207.20" y="1137.1" width="1.1" height="21.7" fill="rgba(74,153,233,0.5)"/>
<rect x="1214.45" y="1104.5" width="1.1" height="54.2" fill="rgba(74,153,233,0.5)"/>
<rect x="1219.45" y="1137.1" width="1.1" height="21.7" fill="rgba(74,153,233,0.5)"/>
<rect x="1309.45" y="1137.1" width="1.1" height="21.7" fill="rgba(74,153,233,0.5)"/>
<rect x="1329.95" y="1137.1" width="1.1" height="21.7" fill="rgba(74,153,233,0.5)"/>
<rect x="1353.02" y="1137.1" width="1.1" height="21.7" fill="rgba(74,153,233,0.5)"/>
<rect x="1354.25" y="1137.1" width="1.1" height="21.7" fill="rgba(74,153,233,0.5)"/>
<rect x="1355.81" y="1137.1" width="1.1" height="21.7" fill="rgba(74,153,233,0.5)"/>
<rect x="1357.92" y="1148.0" width="1.1" height="10.8" fill="rgba(74,153,233,0.5)"/>
<rect x="1360.03" y="1104.5" width="1.1" height="54.2" fill="rgba(74,153,233,0.5)"/>
<rect x="1361.37" y="1137.1" width="1.1" height="21.7" fill="rgba(74,153,233,0.5)"/>
<rect x="1362.70" y="1137.1" width="1.1" height="21.7" fill="rgba(74,153,233,0.5)"/>
<rect x="1366.71" y="1148.0" width="1.1" height="10.8" fill="rgba(74,153,233,0.5)"/>
<rect x="1368.16" y="1137.1" width="1.1" height="21.7" fill="rgba(74,153,233,0.5)"/>
<rect x="1369.83" y="1126.2" width="1.1" height="32.5" fill="rgba(74,153,233,0.5)"/>
<rect x="1372.38" y="1137.1" width="1.1" height="21.7" fill="rgba(74,153,233,0.5)"/>
<rect x="1373.39" y="1115.4" width="1.1" height="43.4" fill="rgba(74,153,233,0.5)"/>
<rect x="1374.50" y="1137.1" width="1.1" height="21.7" fill="rgba(74,153,233,0.5)"/>
<rect x="1376.95" y="1137.1" width="1.1" height="21.7" fill="rgba(74,153,233,0.5)"/>
<rect x="1379.06" y="1148.0" width="1.1" height="10.8" fill="rgba(74,153,233,0.5)"/>
<rect x="1381.84" y="1126.2" width="1.1" height="32.5" fill="rgba(74,153,233,0.5)"/>
<rect x="1383.96" y="1148.0" width="1.1" height="10.8" fill="rgba(74,153,233,0.5)"/>
<rect x="1385.96" y="1104.5" width="1.1" height="54.2" fill="rgba(74,153,233,0.5)"/>
<rect x="1390.97" y="1148.0" width="1.1" height="10.8" fill="rgba(74,153,233,0.5)"/>
<rect x="1409.88" y="1148.0" width="1.1" height="10.8" fill="rgba(74,153,233,0.5)"/>
<rect x="1419.90" y="1148.0" width="1.1" height="10.8" fill="rgba(74,153,233,0.5)"/>
<rect x="1424.90" y="1148.0" width="1.1" height="10.8" fill="rgba(74,153,233,0.5)"/>
<rect x="1425.46" y="1148.0" width="1.1" height="10.8" fill="rgba(74,153,233,0.5)"/>
<rect x="1426.90" y="1126.2" width="1.1" height="32.5" fill="rgba(74,153,233,0.5)"/>
<rect x="1429.02" y="1148.0" width="1.1" height="10.8" fill="rgba(74,153,233,0.5)"/>
<rect x="1430.91" y="1137.1" width="1.1" height="21.7" fill="rgba(74,153,233,0.5)"/>
<rect x="1440.92" y="1148.0" width="1.1" height="10.8" fill="rgba(74,153,233,0.5)"/>
<rect x="1468.85" y="1148.0" width="1.1" height="10.8" fill="rgba(74,153,233,0.5)"/>
</svg>
</div></body></html>
